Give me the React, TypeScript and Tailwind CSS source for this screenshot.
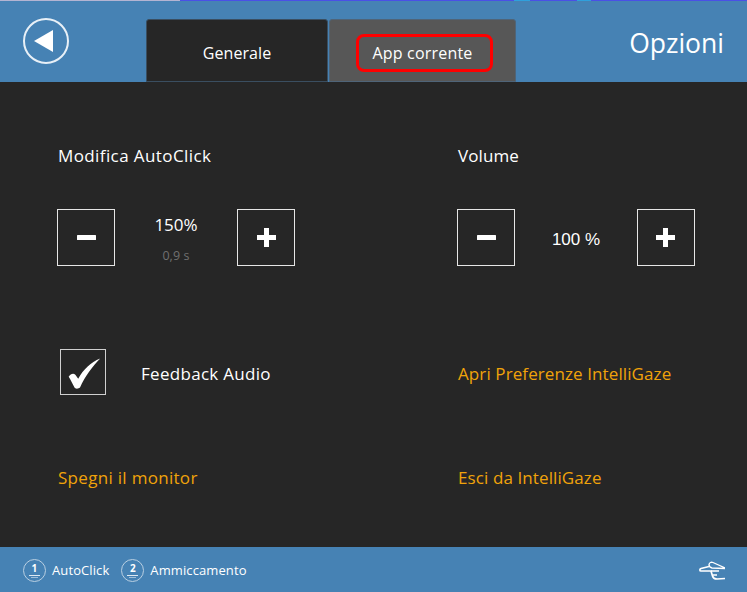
const FONT = "font-['Open_Sans','Noto_Sans',sans-serif]";

const MinusIcon = () => (
  <svg viewBox="0 0 19 5" className="h-[5px] w-[19px]">
    <rect width="19" height="5" rx="0.5" fill="white" />
  </svg>
);

const PlusIcon = () => (
  <svg viewBox="0 0 19 19" className="h-[19px] w-[19px]">
    <path d="M7 0 H12 V7 H19 V12 H12 V19 H7 V12 H0 V7 H7 Z" fill="white" />
  </svg>
);

const Stepper = ({
  value,
  sub,
  valueClass,
}: {
  value: string;
  sub?: string;
  valueClass?: string;
}) => (
  <div className="ml-[-1px] flex h-[57px] w-[238px] items-center justify-between">
    <button className="flex h-[57px] w-[58px] items-center justify-center border border-[#e6e6e6]">
      <MinusIcon />
    </button>
    <div className="flex h-full flex-col items-center">
      <p className={"text-[17px] leading-[22px] text-white " + (valueClass ?? "")}>{value}</p>
      {sub && <p className="mt-[12px] text-[12.500px] leading-[16px] tracking-[0.1px] text-[#707070]">{sub}</p>}
    </div>
    <button className="flex h-[57px] w-[58px] items-center justify-center border border-[#e6e6e6]">
      <PlusIcon />
    </button>
  </div>
);

const KeyBadge = ({ n }: { n: string }) => (
  <span className="relative mt-[1px] flex h-[23px] w-[23px] items-center justify-center rounded-full border border-[#b9cfe2] text-[10px] font-bold leading-none text-white">
    <span className="mt-[-4px]">{n}</span>
    <span className="absolute bottom-[5px] h-px w-[11px] bg-[#dfe9f2]" />
    <span className="absolute bottom-[3px] h-px w-[7px] bg-[#9fbdd8]" />
  </span>
);

export default function App() {
  return (
    <div className={"flex h-[592px] w-[747px] flex-col overflow-hidden bg-[#262626] text-white " + FONT}>
      <div className="flex h-[82px] flex-col bg-[#4682b4]">
        <div className="flex h-px shrink-0">
          <div className="w-[180px] bg-[#b4b4d2]" />
          <div className="w-[334px] bg-[#4a50e6]" />
          <div className="w-[16px] bg-[#2fa0dc]" />
          <div className="w-[47px] bg-[#4a50e6]" />
          <div className="w-[14px] bg-[#2fa0dc]" />
          <div className="flex-1 bg-[#4a50e6]" />
        </div>
        <div className="flex flex-1 items-end">
          <div className="ml-[23px] mb-[18px] flex h-[46px] w-[46px] items-center justify-center rounded-full border-2 border-[#e8f0f7]">
            <svg viewBox="0 0 19 22" className="ml-[-5px] h-[22px] w-[19px]">
              <path d="M0 11 L19 0 V22 Z" fill="white" />
            </svg>
          </div>
          <div className="ml-[77px] flex h-[63px] w-[182px] items-center justify-center rounded-t-[3px] border border-[#3a4e60] bg-[#262626] pt-[5px] text-[16px] tracking-[0.1px]">
            Generale
          </div>
          <div className="ml-px flex h-[63px] w-[187px] items-center rounded-t-[3px] border border-[#4f6478] bg-[#575757] pl-[26px] pt-[5px]">
            <span className="flex h-[38px] w-[137px] items-center justify-center rounded-[8px] border-[3px] border-[#ff0000] pr-[4px] text-[16px] tracking-[0.2px]">
              App corrente
            </span>
          </div>
          <div className="flex h-full flex-1 items-center justify-end pr-[23px] pt-[3px] text-[26.500px] leading-none">
            Opzioni
          </div>
        </div>
      </div>

      <div className="grid flex-1 grid-cols-[400px_1fr] content-start pl-[58px] text-[17px] tracking-[0.1px]">
        <div className="mt-[62px] leading-[24px] tracking-[0.4px]">Modifica AutoClick</div>
        <div className="mt-[62px] leading-[24px]">Volume</div>

        <div className="mt-[41px]">
          <Stepper value="150%" sub="0,9 s" valueClass="mt-[5px] tracking-[0px]" />
        </div>
        <div className="mt-[41px]">
          <Stepper value="100 %" valueClass="mt-[20px] font-['Liberation_Sans',sans-serif] tracking-[0px]" />
        </div>

        <div className="mt-[83px] flex h-[46px] items-center">
          <div className="ml-[2px] flex h-[46px] w-[46px] items-center justify-center border border-[#d0d0d0]">
            <svg viewBox="0 0 46 46" className="h-[44px] w-[44px]">
              <path
                d="M8 28 C10 25 13 24 15 26 L18 30 C23 21 31 13 41 9 C33 17 25 28 20 39 C18 41 15 41 14 39 C12 35 10 31 8 28 Z"
                fill="white"
              />
            </svg>
          </div>
          <span className="ml-[35px] pt-[4px] tracking-[0.3px]">Feedback Audio</span>
        </div>
        <div className="mt-[83px] flex h-[46px] items-center pt-[4px] text-[#f0a30a]">Apri Preferenze IntelliGaze</div>

        <div className="mt-[71px] leading-[24px] tracking-[0.3px] text-[#f0a30a]">Spegni il monitor</div>
        <div className="mt-[71px] leading-[24px] text-[#f0a30a]">Esci da IntelliGaze</div>
      </div>

      <div className="flex h-[45px] items-center bg-[#4682b4] pl-[23px] pr-[22px] text-[13px] tracking-[0.1px]">
        <KeyBadge n="1" />
        <span className="ml-[6px] pt-[3px]">AutoClick</span>
        <span className="ml-[12px]">
          <KeyBadge n="2" />
        </span>
        <span className="ml-[6px] pt-[3px]">Ammiccamento</span>
        <svg viewBox="0 0 26 19" fill="none" stroke="white" strokeWidth="1.700" className="ml-auto mt-[1px] h-[19px] w-[26px]">
          <path d="M26 7 L14 1.500 C12 0.800 10.500 1.500 10 3.500 C10 5 11 6.500 13 7 L26 7.500" strokeWidth="1.300" />
          <path d="M10 5.500 L2 7.500 C0.500 8 0.500 10 2 10 L12 10 L13.500 15 C14 17 16 18 18 18 L26 17.500" />
          <path d="M12 10 L20 10 M14 14 L18 14" />
        </svg>
      </div>
    </div>
  );
}
